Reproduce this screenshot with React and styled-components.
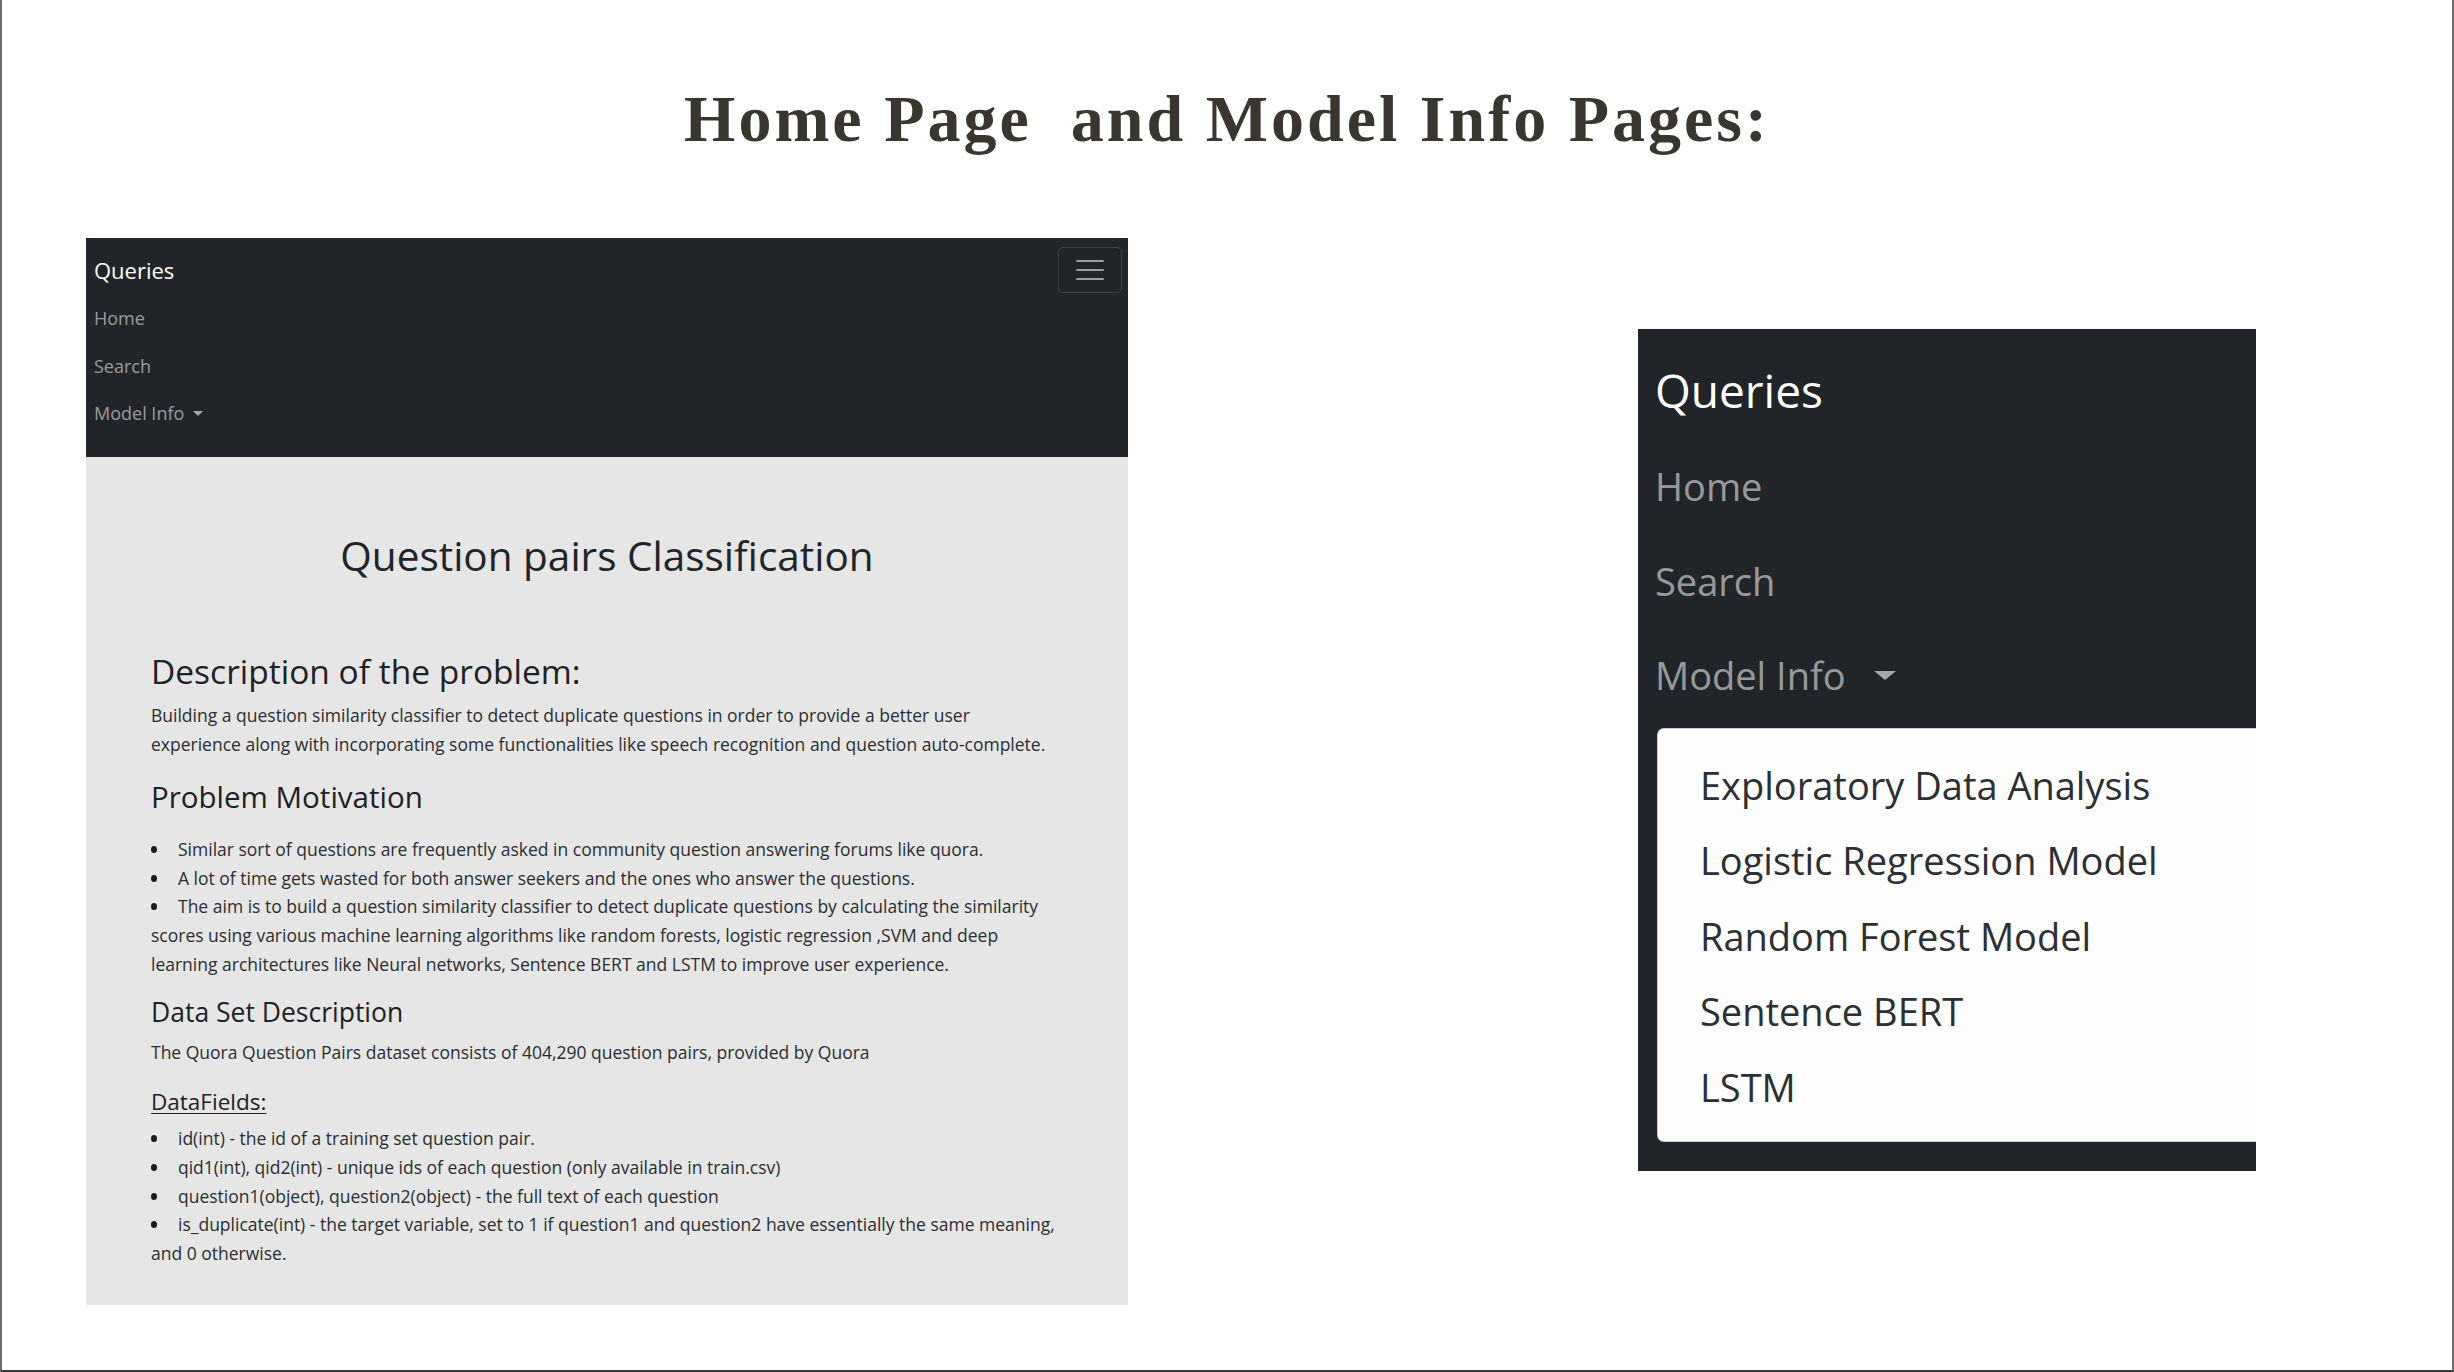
import React from 'react'
import { styled, createGlobalStyle } from 'styled-components'

const GlobalStyle = createGlobalStyle`
    html, body {
        margin: 0;
        padding: 0;
        background: #ffffff;
    }
    * {
        box-sizing: border-box;
    }
`

const Slide = styled.div`
    width: 2454px;
    height: 1372px;
    display: flex;
    flex-direction: column;
    background: #ffffff;
    border-left: 2px solid #6b6b6b;
    border-right: 2px solid #6b6b6b;
    border-bottom: 2px solid #3a3a3a;
    overflow: hidden;
`
const Title = styled.h1`
    margin: 86px 0 0;
    font-family: "Liberation Serif", "Times New Roman", serif;
    font-weight: bold;
    font-size: 66px;
    line-height: 66px;
    letter-spacing: 3px;
    color: #38362f;
    text-align: center;
    white-space: pre;
`
const Row = styled.div`
    display: flex;
    justify-content: space-between;
    align-items: flex-start;
    padding: 0 196px 0 84px;
    margin-top: 86px;
`

/* left: home page screenshot */
const HomeShot = styled.div`
    width: 1042px;
    font-family: "Open Sans", "Noto Sans", sans-serif;
`
const Navbar = styled.div`
    background: #212529;
    padding: 9px 6px 19px 8px;
`
const BrandRow = styled.div`
    display: flex;
    justify-content: space-between;
    align-items: center;
    height: 46px;
`
const Brand = styled.span`
    color: #ffffff;
    font-size: ${p => p.$size}px;
    line-height: ${p => p.$lh}px;
`
const Toggler = styled.div`
    width: 64px;
    height: 46px;
    border: 1px solid rgba(255, 255, 255, 0.12);
    border-radius: 5px;
    display: flex;
    align-items: center;
    justify-content: center;
`
const NavList = styled.div`
    display: flex;
    flex-direction: column;
    margin-top: ${p => p.$top}px;
`
const NavLink = styled.span`
    color: rgba(255, 255, 255, 0.55);
    font-size: ${p => p.$size}px;
    line-height: ${p => p.$lh}px;
    display: flex;
    align-items: center;
`
const Caret = styled.span`
    display: inline-block;
    margin-left: ${p => p.$gap}px;
    border-top: ${p => p.$h}px solid rgba(255, 255, 255, 0.6);
    border-left: ${p => p.$w}px solid transparent;
    border-right: ${p => p.$w}px solid transparent;
`
const Content = styled.div`
    background: #e6e6e6;
    color: #212529;
    padding: 75px 65px 37px;
`
const PageHeading = styled.h2`
    margin: 0;
    font-weight: 500;
    font-size: 40.5px;
    line-height: 48px;
    text-align: center;
`
const SectionHeading = styled.h3`
    margin: ${p => p.$top}px 0 0;
    font-weight: 500;
    font-size: ${p => p.$size}px;
    line-height: 1.2;
    color: #1e2125;
    text-decoration: ${p => (p.$underline ? 'underline' : 'none')};
    text-underline-offset: 3px;
    text-decoration-thickness: 1px;
`
const Para = styled.p`
    margin: ${p => p.$top}px 0 0;
    font-size: 17.5px;
    line-height: ${p => p.$lh || 28.7}px;
    color: #2b2e32;
`
const Bullets = styled.ul`
    list-style: none;
    margin: ${p => p.$top}px 0 0;
    padding: 0;
`
const Bullet = styled.li`
    font-size: 17.5px;
    line-height: 28.7px;
    color: #2b2e32;

    &::before {
        content: "";
        display: inline-block;
        width: 6px;
        height: 7px;
        border-radius: 50%;
        background: #1a1a1a;
        margin: 0 21px 0 0;
        vertical-align: 3px;
    }
`

/* right: model info dropdown screenshot */
const MenuShot = styled.div`
    width: 618px;
    margin-top: 91px;
    background: #212529;
    padding: 27px 0 29px 17px;
    overflow: hidden;
    font-family: "Open Sans", "Noto Sans", sans-serif;
`
const Dropdown = styled.div`
    width: 680px;
    margin-top: 5px;
    margin-left: 2px;
    background: #fdfdfd;
    border: 1px solid rgba(0, 0, 0, 0.2);
    border-radius: 7px;
    padding: 19px 0 16px 42px;
`
const MenuItem = styled.div`
    font-size: 38px;
    line-height: 75.5px;
    color: #2c2f33;
`

const Hamburger = () => (
  <svg width="30" height="24" viewBox="0 0 30 24">
    <g stroke="rgba(255,255,255,0.55)" strokeWidth="2.2" strokeLinecap="round">
      <line x1="2" y1="3" x2="28" y2="3" />
      <line x1="2" y1="12" x2="28" y2="12" />
      <line x1="2" y1="21" x2="28" y2="21" />
    </g>
  </svg>
)

const modelPages = [
  'Exploratory Data Analysis',
  'Logistic Regression Model',
  'Random Forest Model',
  'Sentence BERT',
  'LSTM',
]

const App = () => {
  return (
    <Slide>
      <GlobalStyle />
      <Title>{'Home Page  and Model Info Pages:'}</Title>
      <Row>
        <HomeShot>
          <Navbar>
            <BrandRow>
              <Brand $size={22} $lh={46}>Queries</Brand>
              <Toggler><Hamburger /></Toggler>
            </BrandRow>
            <NavList $top={2}>
              <NavLink $size={18} $lh={47.5}>Home</NavLink>
              <NavLink $size={18} $lh={47.5}>Search</NavLink>
              <NavLink $size={18} $lh={47.5}>
                Model Info
                <Caret $gap={9} $h={5} $w={5} />
              </NavLink>
            </NavList>
          </Navbar>
          <Content>
            <PageHeading>Question pairs Classification</PageHeading>
            <SectionHeading $top={71} $size={33.5}>Description of the problem:</SectionHeading>
            <Para $top={10} $lh={29}>
              Building a question similarity classifier to detect duplicate questions in order to provide a better user
              <br />
              experience along with incorporating some functionalities like speech recognition and question auto-complete.
            </Para>
            <SectionHeading $top={20} $size={29.5}>Problem Motivation</SectionHeading>
            <Bullets $top={21}>
              <Bullet>Similar sort of questions are frequently asked in community question answering forums like quora.</Bullet>
              <Bullet>A lot of time gets wasted for both answer seekers and the ones who answer the questions.</Bullet>
              <Bullet>
                The aim is to build a question similarity classifier to detect duplicate questions by calculating the similarity
                <br />
                scores using various machine learning algorithms like random forests, logistic regression ,SVM and deep
                <br />
                learning architectures like Neural networks, Sentence BERT and LSTM to improve user experience.
              </Bullet>
            </Bullets>
            <SectionHeading $top={18} $size={26.5}>Data Set Description</SectionHeading>
            <Para $top={10}>The Quora Question Pairs dataset consists of 404,290 question pairs, provided by Quora</Para>
            <SectionHeading $top={21} $size={22.5} $underline>DataFields:</SectionHeading>
            <Bullets $top={9}>
              <Bullet>id(int) - the id of a training set question pair.</Bullet>
              <Bullet>qid1(int), qid2(int) - unique ids of each question (only available in train.csv)</Bullet>
              <Bullet>question1(object), question2(object) - the full text of each question</Bullet>
              <Bullet>
                is_duplicate(int) - the target variable, set to 1 if question1 and question2 have essentially the same meaning,
                <br />
                and 0 otherwise.
              </Bullet>
            </Bullets>
          </Content>
        </HomeShot>

        <MenuShot>
          <Brand $size={46} $lh={69}>Queries</Brand>
          <NavList $top={14}>
            <NavLink $size={38} $lh={94.5}>Home</NavLink>
            <NavLink $size={38} $lh={94.5}>Search</NavLink>
            <NavLink $size={38} $lh={94.5}>
              Model Info
              <Caret $gap={28} $h={9} $w={11} />
            </NavLink>
          </NavList>
          <Dropdown>
            {modelPages.map(name => (
              <MenuItem key={name}>{name}</MenuItem>
            ))}
          </Dropdown>
        </MenuShot>
      </Row>
    </Slide>
  )
}

export default App
